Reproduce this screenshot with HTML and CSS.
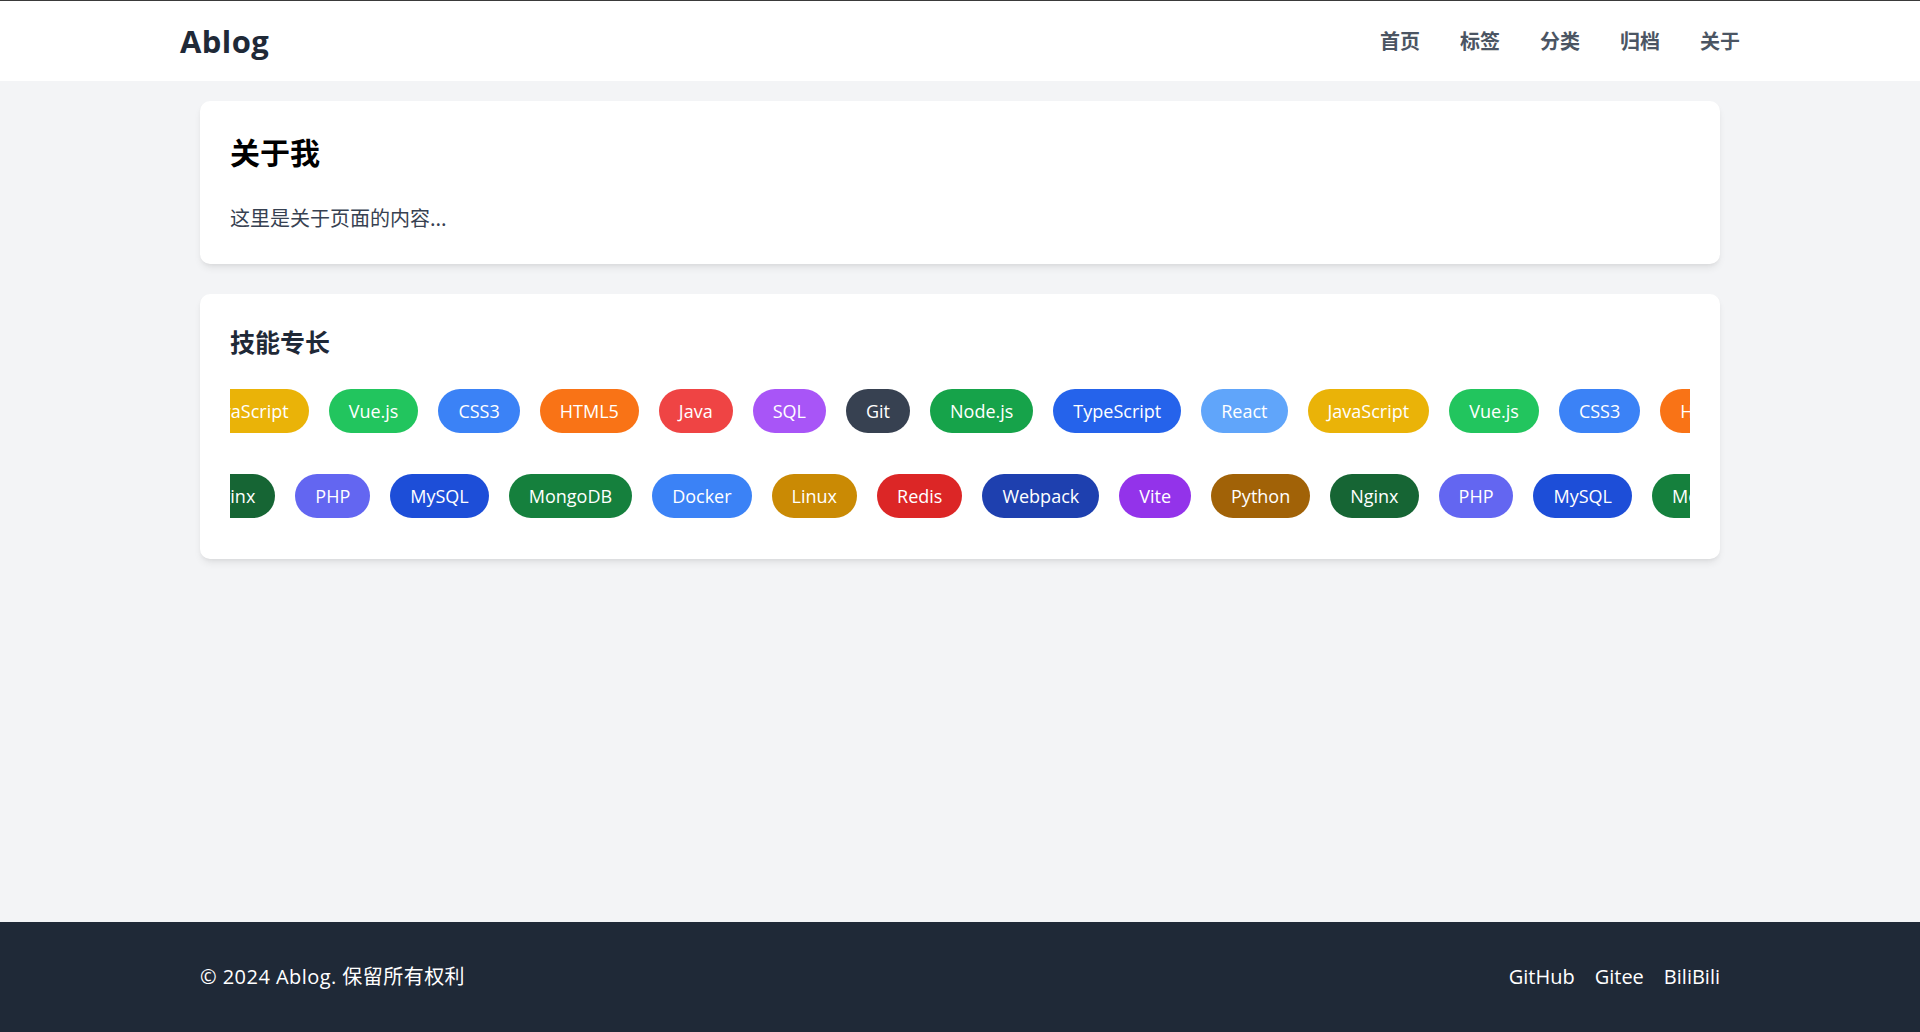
FILE: index.html
```html
<!DOCTYPE html>
<html lang="zh-CN">
<head>
<meta charset="utf-8">
<title>Ablog - 关于</title>
<link rel="stylesheet" href="styles.css">
</head>
<body>
<div class="page">
  <header class="site-header">
    <div class="header-inner">
      <a class="logo" href="#">Ablog</a>
      <nav class="nav">
        <a href="#">首页</a>
        <a href="#">标签</a>
        <a href="#">分类</a>
        <a href="#">归档</a>
        <a href="#">关于</a>
      </nav>
    </div>
  </header>

  <main class="main">
    <section class="card">
      <h1 class="about-title">关于我</h1>
      <p class="about-text">这里是关于页面的内容...</p>
    </section>

    <section class="card skills-card">
      <h2 class="skills-title">技能专长</h2>
      <div class="skills-rows">
        <div class="skill-viewport">
          <div class="skill-track">
            <span class="pill c-yellow5">JavaScript</span>
            <span class="pill c-green5">Vue.js</span>
            <span class="pill c-blue5">CSS3</span>
            <span class="pill c-orange5">HTML5</span>
            <span class="pill c-red5">Java</span>
            <span class="pill c-purple5">SQL</span>
            <span class="pill c-gray7">Git</span>
            <span class="pill c-green6">Node.js</span>
            <span class="pill c-blue6">TypeScript</span>
            <span class="pill c-blue4">React</span>
            <span class="pill c-yellow5">JavaScript</span>
            <span class="pill c-green5">Vue.js</span>
            <span class="pill c-blue5">CSS3</span>
            <span class="pill c-orange5">HTML5</span>
            <span class="pill c-red5">Java</span>
          </div>
        </div>
        <div class="skill-viewport">
          <div class="skill-track">
            <span class="pill c-green8">Nginx</span>
            <span class="pill c-indigo5">PHP</span>
            <span class="pill c-blue7">MySQL</span>
            <span class="pill c-green7">MongoDB</span>
            <span class="pill c-blue5">Docker</span>
            <span class="pill c-yellow6">Linux</span>
            <span class="pill c-red6">Redis</span>
            <span class="pill c-blue8">Webpack</span>
            <span class="pill c-purple6">Vite</span>
            <span class="pill c-yellow7">Python</span>
            <span class="pill c-green8">Nginx</span>
            <span class="pill c-indigo5">PHP</span>
            <span class="pill c-blue7">MySQL</span>
            <span class="pill c-green7">MongoDB</span>
            <span class="pill c-blue5">Docker</span>
          </div>
        </div>
      </div>
    </section>
  </main>

  <footer class="site-footer">
    <div class="footer-inner">
      <p class="copyright">© 2024 Ablog. 保留所有权利</p>
      <div class="footer-links">
        <a href="#">GitHub</a>
        <a href="#">Gitee</a>
        <a href="#">BiliBili</a>
      </div>
    </div>
  </footer>
</div>
</body>
</html>
```

FILE: styles.css
```css
* {
  box-sizing: border-box;
}

html, body {
  margin: 0;
  padding: 0;
}

body {
  font-family: "Open Sans", "Noto Sans CJK SC", sans-serif;
  background: #f3f4f6;
  color: #1f2937;
}

a {
  text-decoration: none;
  color: inherit;
}

.page {
  min-height: 100vh;
  display: flex;
  flex-direction: column;
}

/* Header */
.site-header {
  background: #ffffff;
  border-top: 1px solid #3a3a3a;
}

.header-inner {
  max-width: 1600px;
  margin: 0 auto;
  padding: 20px 20px;
  height: 80px;
  display: flex;
  align-items: center;
  justify-content: space-between;
}

.logo {
  font-size: 31px;
  line-height: 40px;
  font-weight: 700;
  letter-spacing: 0.4px;
  color: #1f2937;
}

.nav {
  display: flex;
  gap: 40px;
}

.nav a {
  font-family: "Noto Sans CJK SC", sans-serif;
  font-size: 20px;
  line-height: 30px;
  font-weight: 700;
  color: #4b5563;
}

/* Main */
.main {
  flex: 1;
  width: 100%;
  max-width: 1600px;
  margin: 0 auto;
  padding: 20px 40px;
  display: flex;
  flex-direction: column;
  gap: 30px;
}

.card {
  background: #ffffff;
  border-radius: 10px;
  padding: 30px;
  box-shadow: 0 5px 8px -2px rgba(0, 0, 0, 0.09), 0 2px 5px -2px rgba(0, 0, 0, 0.07);
}

.about-title {
  margin: 0 0 30px;
  font-family: "Noto Sans CJK SC", sans-serif;
  font-size: 30px;
  line-height: 40px;
  font-weight: 700;
  color: #000000;
}

.about-text {
  margin: 0;
  font-family: "Noto Sans CJK SC", sans-serif;
  font-size: 20px;
  line-height: 33px;
  color: #374151;
}

.skills-title {
  margin: 0 0 30px;
  font-family: "Noto Sans CJK SC", sans-serif;
  font-size: 25px;
  line-height: 35px;
  font-weight: 700;
  color: #1f2937;
}

.skills-rows {
  display: flex;
  flex-direction: column;
  gap: 41px;
  padding-bottom: 11px;
}

.skill-viewport {
  overflow: hidden;
}

.skill-track {
  display: flex;
  gap: 20px;
  width: max-content;
  transform: translateX(-43px);
}

.pill {
  display: inline-block;
  padding: 10px 20px;
  font-size: 18px;
  line-height: 24px;
  color: #ffffff;
  border-radius: 999px;
  white-space: nowrap;
}

.c-yellow5 { background: #eab308; }
.c-yellow6 { background: #ca8a04; }
.c-yellow7 { background: #a16207; }
.c-green5 { background: #22c55e; }
.c-green6 { background: #16a34a; }
.c-green7 { background: #15803d; }
.c-green8 { background: #166534; }
.c-blue4 { background: #60a5fa; }
.c-blue5 { background: #3b82f6; }
.c-blue6 { background: #2563eb; }
.c-blue7 { background: #1d4ed8; }
.c-blue8 { background: #1e40af; }
.c-orange5 { background: #f97316; }
.c-red5 { background: #ef4444; }
.c-red6 { background: #dc2626; }
.c-purple5 { background: #a855f7; }
.c-purple6 { background: #9333ea; }
.c-gray7 { background: #374151; }
.c-indigo5 { background: #6366f1; }

/* Footer */
.site-footer {
  background: #1f2937;
  color: #ffffff;
}

.footer-inner {
  max-width: 1600px;
  margin: 0 auto;
  padding: 40px 40px;
  display: flex;
  align-items: center;
  justify-content: space-between;
}

.copyright {
  margin: 0;
  font-size: 20px;
  line-height: 30px;
  letter-spacing: 0.45px;
}

.footer-links {
  display: flex;
  gap: 20px;
  font-size: 20px;
  line-height: 30px;
}
```
